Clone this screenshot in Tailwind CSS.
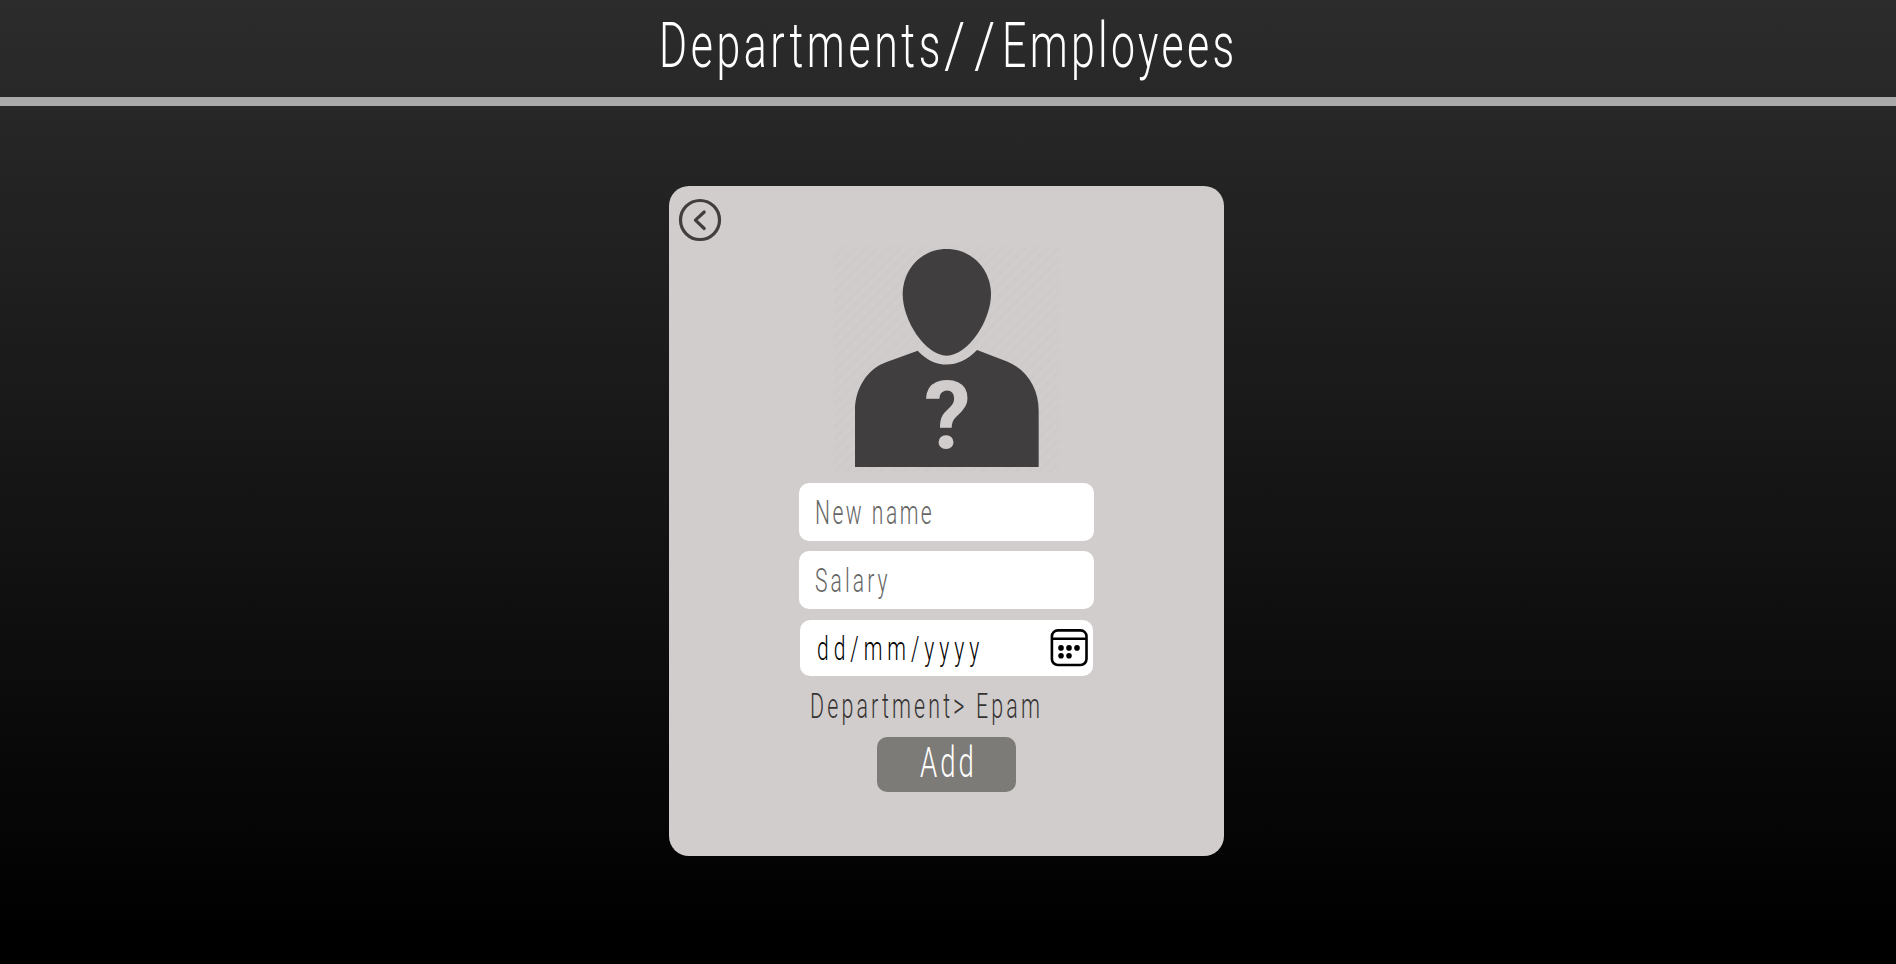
<!DOCTYPE html>
<html lang="en">
<head>
<meta charset="utf-8">
<title>Departments//Employees</title>
<script src="https://cdn.jsdelivr.net/npm/@tailwindcss/browser@4"></script>
</head>
<body class="flex h-screen flex-col overflow-hidden bg-linear-to-b/srgb from-[#2c2c2c] to-black to-97% font-['Roboto',sans-serif]">
<header class="flex h-[106px] shrink-0 border-b-[9px] border-[#aaaaaa] pl-[659px]">
  <h1 class="mt-[9px] flex h-[74px] text-[63px] leading-[74px] font-light whitespace-nowrap text-white"><span class="w-[285px] origin-left scale-x-68 tracking-[5.3px]">Departments</span><span class="w-[30px] origin-left scale-x-85">/</span><span class="w-[28px] origin-left scale-x-85">/</span><span class="w-[240px] origin-left scale-x-68 tracking-[4.9px]">Employees</span></h1>
</header>
<main class="mt-20 ml-[669px] flex h-[670px] w-[555px] shrink-0 flex-col items-center rounded-[20px] bg-[#d1cdcc]">
  <a class="mt-[12px] ml-[9px] h-[44px] self-start" aria-label="Back">
    <svg class="size-[44px]" viewBox="0 0 44 44" fill="none" stroke="#403e3e" stroke-width="3.2"><circle cx="22" cy="22" r="19.5"/><path d="M26.2 14 17.4 22.2 26.2 30.5" stroke-linecap="round" stroke-linejoin="round"/></svg>
  </a>
  <svg class="mt-[4px] ml-px h-[226px] w-[226px] shrink-0" viewBox="42 33 678 678">
    <defs><pattern id="hatch" width="24" height="24" patternUnits="userSpaceOnUse" patternTransform="rotate(45)"><path d="M6 0V24" stroke="#cfcbca" stroke-width="12"/></pattern></defs>
    <rect x="42" y="33" width="678" height="678" fill="url(#hatch)"/>
    <g fill="#403e3f">
      <path d="M380 42C457 42 513 105 513 178C513 258 443 362 380 362C317 362 248 258 248 178C248 105 303 42 380 42Z"/>
      <path d="M293 347C345 403 415 403 471 345L563 380C621 405 656 460 656 526V696H105V526C105 460 142 401 200 381Z"/>
    </g>
    <text x="382" y="638" text-anchor="middle" class="font-['Roboto'] text-[282px] font-bold" fill="#d1cdcc">?</text>
  </svg>
  <div class="mt-[11px] flex h-[58px] w-[295px] shrink-0 items-center rounded-[10px] bg-white pl-[16px]">
    <span class="origin-left scale-x-62 text-[34px] leading-10 font-light tracking-[4px] whitespace-nowrap text-[#666666]">New name</span>
  </div>
  <div class="mt-[10px] flex h-[58px] w-[295px] shrink-0 items-center rounded-[10px] bg-white pl-[16px]">
    <span class="origin-left scale-x-62 text-[34px] leading-10 font-light tracking-[5px] whitespace-nowrap text-[#666666]">Salary</span>
  </div>
  <div class="mt-[11px] flex h-[56px] w-[293px] shrink-0 items-center rounded-[10px] bg-white pl-[17px]">
    <span class="w-[234px] shrink-0 origin-left scale-x-62 text-[34px] leading-10 font-light tracking-[8px] whitespace-nowrap text-black">dd/mm/yyyy</span>
    <svg class="-ml-[2px] size-[40px] shrink-0" viewBox="0 0 40 40" fill="none" stroke="#000" stroke-width="2.6"><rect x="2.9" y="2.4" width="34.6" height="34.6" rx="6"/><path d="M3 10.7H38"/><g fill="#000" stroke="none"><circle cx="12" cy="19.9" r="2.8"/><circle cx="20" cy="19.9" r="2.8"/><circle cx="28" cy="19.9" r="2.8"/><circle cx="12" cy="27.7" r="2.8"/><circle cx="20" cy="27.7" r="2.8"/></g></svg>
  </div>
  <div class="mt-[9px] h-[42px] w-[274px] shrink-0">
    <span class="inline-block origin-left scale-x-62 text-[34.5px] leading-[42px] font-light tracking-[5.1px] whitespace-nowrap text-[#353333]">Department&gt; Epam</span>
  </div>
  <button class="mt-[10px] flex h-[55px] w-[139px] shrink-0 items-start rounded-[10px] bg-[#7d7b78] pl-[43px]">
    <span class="origin-left scale-x-64 text-[43px] leading-[50px] font-light tracking-[4.6px] text-white">Add</span>
  </button>
</main>
</body>
</html>
